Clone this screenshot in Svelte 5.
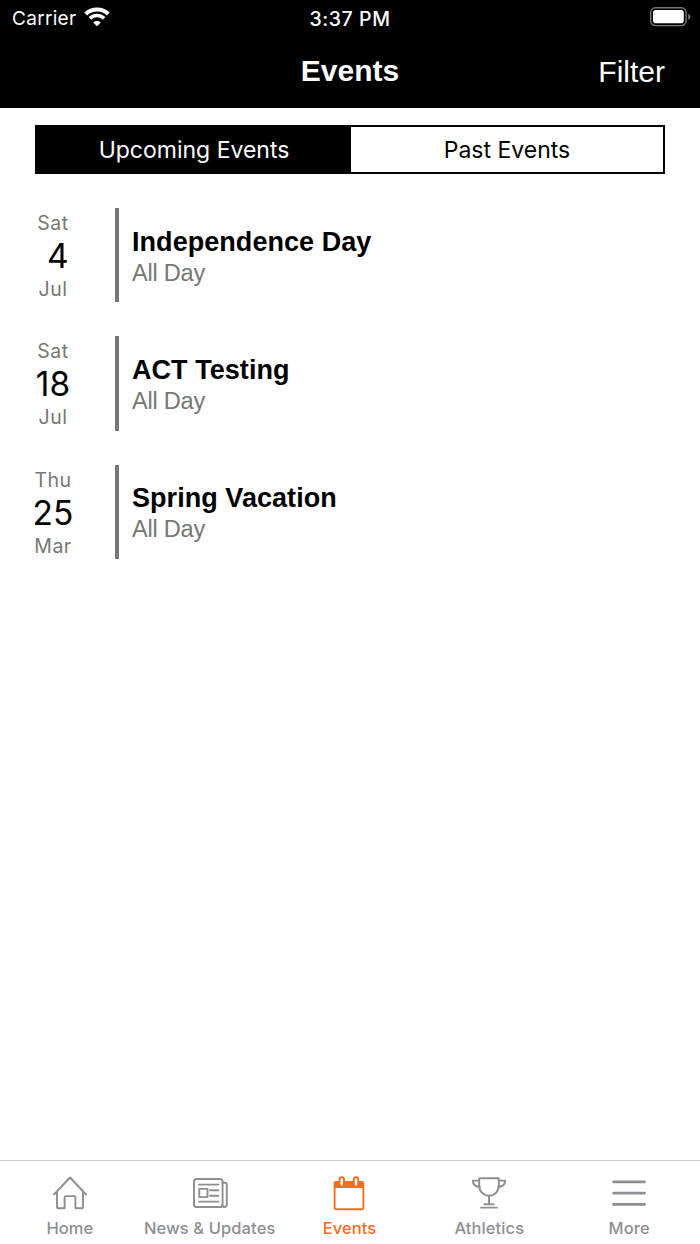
<script lang="ts">
  type Tab = 'home' | 'news' | 'events' | 'athletics' | 'more';

  const segments = ['Upcoming Events', 'Past Events'];
  let selected = $state(0);
  let activeTab = $state<Tab>('events');

  const events = [
    { weekday: 'Sat', day: ' 4', month: 'Jul', title: 'Independence Day', time: 'All Day' },
    { weekday: 'Sat', day: '18', month: 'Jul', title: 'ACT Testing', time: 'All Day' },
    { weekday: 'Thu', day: '25', month: 'Mar', title: 'Spring Vacation', time: 'All Day' }
  ];

  const tabs: Array<{ id: Tab; label: string }> = [
    { id: 'home', label: 'Home' },
    { id: 'news', label: 'News & Updates' },
    { id: 'events', label: 'Events' },
    { id: 'athletics', label: 'Athletics' },
    { id: 'more', label: 'More' }
  ];
</script>

<div class="screen">
  <header>
    <div class="status-bar">
      <div class="carrier">
        <span>Carrier</span>
        <svg class="wifi" width="26" height="20" viewBox="0 0 26 20">
          <path d="M1.7 7 A16.4 16.4 0 0 1 24.3 7" fill="none" stroke="#fff" stroke-width="4" />
          <path d="M5.9 11.4 A10.2 10.2 0 0 1 20.1 11.4" fill="none" stroke="#fff" stroke-width="3.6" />
          <path d="M9.2 15.4 A5.6 5.6 0 0 1 16.8 15.4 L13 19.2 Z" fill="#fff" />
        </svg>
      </div>
      <span class="clock">3:37 PM</span>
      <div class="power">
        <svg width="42" height="20" viewBox="0 0 42 20">
          <rect x="1.7" y="0.8" width="35.4" height="17.8" rx="4.8" fill="none" stroke="#777" stroke-width="1.4" />
          <rect x="4" y="3" width="30.8" height="13.2" rx="2.8" fill="#fff" />
          <path d="M39.2 6.5 Q41.4 8 41.4 9.7 Q41.4 11.4 39.2 13 Z" fill="#777" />
        </svg>
      </div>
    </div>
    <div class="nav-bar">
      <span></span>
      <h1>Events</h1>
      <button class="filter">Filter</button>
    </div>
  </header>

  <main>
    <div class="segmented">
      {#each segments as label, i}
        <button class="segment" class:selected={selected === i} onclick={() => (selected = i)}>{label}</button>
      {/each}
    </div>

    <ul class="events">
      {#each events as event}
        <li class="event">
          <div class="date">
            <span class="small">{event.weekday}</span>
            <span class="day">{event.day}</span>
            <span class="small">{event.month}</span>
          </div>
          <div class="details">
            <h2>{event.title}</h2>
            <p>{event.time}</p>
          </div>
        </li>
      {/each}
    </ul>
  </main>

  <nav class="tab-bar">
    {#each tabs as tab}
      <button class="tab" class:active={activeTab === tab.id} onclick={() => (activeTab = tab.id)}>
        <svg class="icon" width="36" height="36" viewBox="0 0 36 36">
          {#if tab.id === 'home'}
            <path d="M2 19.5 L18 2.5 L34 19.5 M5 16.8 V32.2 Q5 33.3 6.1 33.3 H12.6 V22.2 Q12.6 21.1 13.7 21.1 H22.3 Q23.4 21.1 23.4 22.2 V33.3 H29.9 Q31 33.3 31 32.2 V16.8" />
          {:else if tab.id === 'news'}
            <rect x="2" y="4" width="28.6" height="28" rx="2.6" />
            <path d="M30.6 7.8 H33 Q34.8 7.8 34.8 9.6 V29.6 Q34.8 32 32.4 32 Q30 32 30 29.6" />
            <path d="M7 9.6 H26.4 M18 15.3 H26.4 M18 20.8 H26.4 M7 26.6 H26.4 M7.3 13.9 H15.5 V22.1 H7.3 Z" />
          {:else if tab.id === 'events'}
            <rect x="3.6" y="7" width="28.8" height="27.2" rx="1.6" />
            <path class="solid" d="M3 7 H33 V13 H3 Z" />
            <rect class="ring" x="8.6" y="2.2" width="4.4" height="9.2" rx="2.2" />
            <rect class="ring" x="22.8" y="2.2" width="4.4" height="9.2" rx="2.2" />
          {:else if tab.id === 'athletics'}
            <path d="M8.2 3.3 H27.8 V11 A9.8 9.8 0 0 1 8.2 11 Z M8.2 5.6 H1.8 Q2.2 11.8 9 12 M27.8 5.6 H34.2 Q33.8 11.8 27 12 M18 20.8 V29 M13.4 29.2 H22.6 M10 32.6 H26" />
          {:else}
            <path class="thick" d="M2.5 6.9 H33.5 M2.5 18.1 H33.5 M2.5 29.4 H33.5" />
          {/if}
        </svg>
        <span>{tab.label}</span>
      </button>
    {/each}
  </nav>
</div>

<style>
  :global(body) {
    margin: 0;
    background: #fff;
  }

  .screen {
    display: flex;
    flex-direction: column;
    height: 1244px;
    width: 700px;
    font-family: Inter, 'Liberation Sans', sans-serif;
    color: #000;
  }

  button {
    border: 0;
    padding: 0;
    background: none;
    color: inherit;
    font: inherit;
  }

  header {
    box-sizing: border-box;
    height: 108px;
    background: #000;
    color: #fff;
  }

  .status-bar {
    display: grid;
    grid-template-columns: 1fr auto 1fr;
    align-items: center;
    height: 36px;
    padding: 0 9px 0 12px;
    font-size: 19px;
    line-height: 37px;
  }

  .carrier {
    display: flex;
    align-items: center;
    gap: 8px;
    letter-spacing: 0.3px;
  }

  .wifi {
    margin-top: -4px;
  }

  .clock {
    margin-left: -3px;
    font-weight: 500;
    font-size: 19.5px;
    letter-spacing: 0.6px;
    line-height: 36px;
  }

  .power {
    display: flex;
    justify-content: flex-end;
    margin-top: -3px;
  }

  .nav-bar {
    display: grid;
    grid-template-columns: 1fr auto 1fr;
    align-items: center;
    height: 70px;
    padding: 0 35px;
    font-family: 'Liberation Sans', Arial, sans-serif;
  }

  h1 {
    margin: 0;
    font-size: 30px;
    font-weight: 700;
    line-height: 70px;
  }

  .filter {
    justify-self: end;
    padding-top: 2px;
    font-size: 30px;
  }

  main {
    flex: 1;
    padding-top: 17px;
  }

  .segmented {
    display: grid;
    grid-template-columns: 314px 1fr;
    box-sizing: border-box;
    height: 49px;
    margin: 0 35px;
    border: 2px solid #000;
  }

  .segment {
    font-size: 23px;
  }

  .segment.selected {
    background: #000;
    color: #fff;
  }

  .events {
    display: flex;
    flex-direction: column;
    gap: 34px;
    margin: 34px 0 0;
    padding: 0;
    list-style: none;
  }

  .event {
    display: flex;
    height: 94.4px;
  }

  .date {
    display: flex;
    flex-direction: column;
    align-items: center;
    width: 106px;
    margin-right: 9px;
  }

  .small {
    color: #777;
    font-size: 19.5px;
    line-height: 30px;
    letter-spacing: 0.5px;
  }

  .day {
    font-size: 33.5px;
    line-height: 36px;
    white-space: pre;
  }

  .details {
    display: flex;
    flex-direction: column;
    justify-content: center;
    padding: 3px 0 0 13px;
    border-left: 4px solid #777;
    font-family: 'Liberation Sans', Arial, sans-serif;
  }

  h2 {
    margin: 0;
    font-size: 27px;
    font-weight: 700;
    line-height: 32px;
    letter-spacing: 0.05px;
  }

  .details p {
    margin: 0;
    color: #777;
    font-size: 23.5px;
    line-height: 30px;
    letter-spacing: -0.2px;
  }

  .tab-bar {
    display: grid;
    grid-template-columns: repeat(5, 1fr);
    box-sizing: border-box;
    height: 84px;
    padding-right: 1px;
    border-top: 1px solid #ccc;
    color: #8e8e93;
  }

  .tab {
    display: flex;
    flex-direction: column;
    align-items: center;
    padding-top: 14px;
    font-size: 16.5px;
    font-weight: 500;
    line-height: 22px;
    letter-spacing: 0.1px;
    white-space: nowrap;
  }

  .tab span {
    margin-top: 6px;
  }

  .tab.active {
    color: #f36e21;
  }

  .icon {
    fill: none;
    stroke: currentColor;
    stroke-width: 1.9;
    stroke-linecap: round;
    stroke-linejoin: round;
  }

  .icon .thick {
    stroke-width: 2.6;
  }

  .icon .solid {
    fill: currentColor;
    stroke: none;
  }

  .icon .ring {
    fill: #fff;
  }
</style>
